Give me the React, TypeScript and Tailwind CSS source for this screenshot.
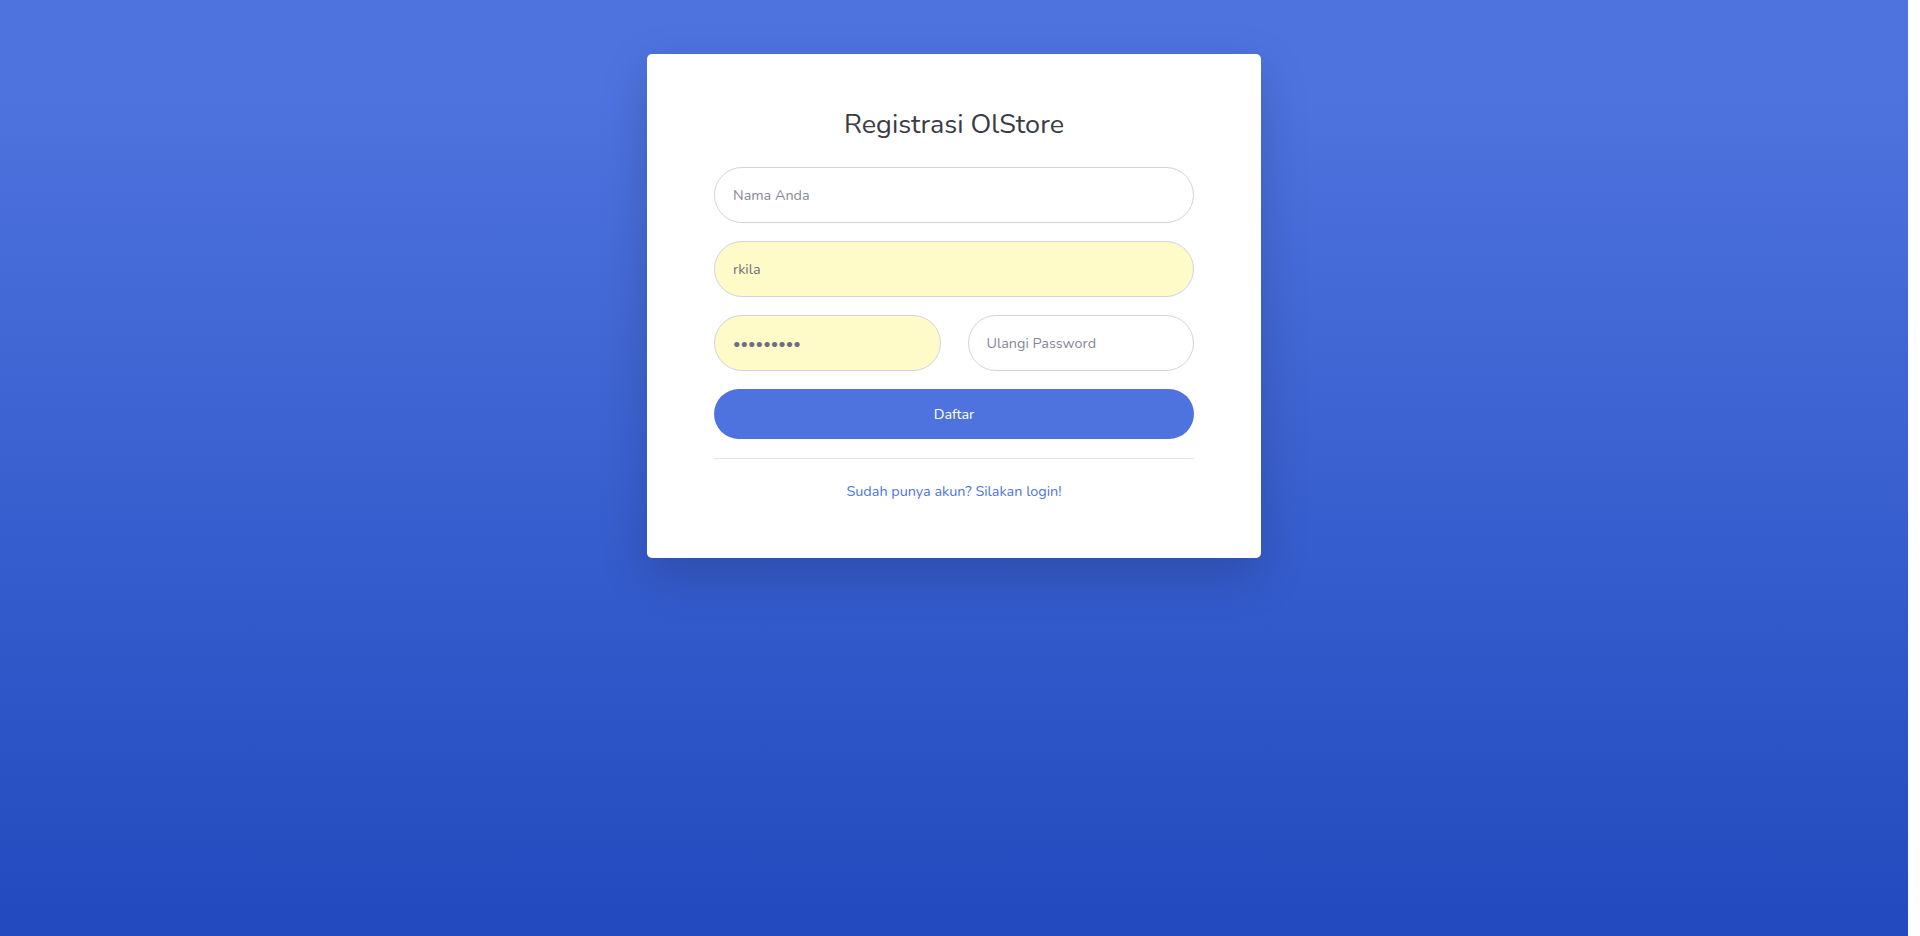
import { useState } from 'react';

export default function App() {
  const [nama, setNama] = useState('');
  const [email, setEmail] = useState('rkila');
  const [password, setPassword] = useState('rahasia12');
  const [ulangi, setUlangi] = useState('');

  const inputBase =
    'w-full h-[56px] rounded-full border border-[#d1d3e2] px-[18px] text-[14.4px] text-[#6e707e] placeholder:text-[#858796] outline-none';

  return (
    <div className="flex min-h-screen w-full bg-white font-['Nunito','Lato',sans-serif]">
      <div className="flex-1 bg-[linear-gradient(180deg,#4e73df_10%,#224abe_100%)]">
        <div className="flex justify-center pt-[54px]">
          <div className="w-[614px] bg-white rounded-[5px] shadow-[0_16px_48px_rgba(0,0,0,0.175)] px-[67px] pt-[54px] pb-[55px]">
            <h1 className="text-center text-[27px] leading-[34px] text-[#3a3b45] font-normal mb-[25px]">
              Registrasi OlStore
            </h1>

            <form className="flex flex-col gap-[18px]" onSubmit={(e) => e.preventDefault()}>
              <input
                type="text"
                className={`${inputBase} bg-white`}
                placeholder="Nama Anda"
                value={nama}
                onChange={(e) => setNama(e.target.value)}
              />
              <input
                type="text"
                className={`${inputBase} bg-[#fefbc9]`}
                placeholder="Email Anda"
                value={email}
                onChange={(e) => setEmail(e.target.value)}
              />
              <div className="grid grid-cols-2 gap-[27px]">
                <input
                  type="password"
                  className={`${inputBase} bg-[#fefbc9]`}
                  placeholder="Password"
                  value={password}
                  onChange={(e) => setPassword(e.target.value)}
                />
                <input
                  type="password"
                  className={`${inputBase} bg-white`}
                  placeholder="Ulangi Password"
                  value={ulangi}
                  onChange={(e) => setUlangi(e.target.value)}
                />
              </div>
              <button
                type="submit"
                className="w-full h-[50px] pt-[2px] rounded-full bg-[#4e73df] text-white text-[14.4px] hover:bg-[#2e59d9]"
              >
                Daftar
              </button>
            </form>

            <hr className="mt-[19px] border-0 border-t border-[#e3e6f0]" />

            <div className="mt-[22px] text-center text-[14.4px] leading-[21.6px]">
              <a href="#" className="text-[#4e73df] hover:underline">
                Sudah punya akun? Silakan login!
              </a>
            </div>
          </div>
        </div>
      </div>
      <div className="w-[12px] bg-white" />
    </div>
  );
}
